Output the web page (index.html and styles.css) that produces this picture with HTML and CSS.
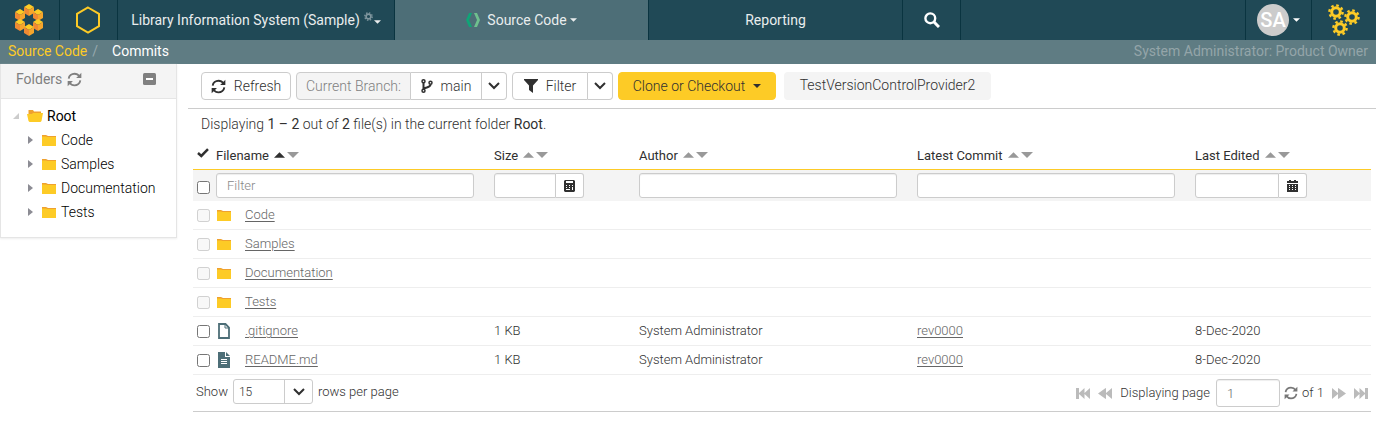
FILE: index.html
```html
<!DOCTYPE html>
<html lang="en">
<head>
<meta charset="utf-8">
<title>Source Code - Commits</title>
<link rel="stylesheet" href="styles.css">
</head>
<body>
<svg class="sprite" aria-hidden="true">
  <symbol id="cube" viewBox="1 0 10 12"><path fill="#fdcb26" d="M6 0l5 3-5 3-5-3z"/><path fill="#f08a33" d="M1 3l5 3v6L1 9z"/><path fill="#f6a52c" d="M11 3L6 6v6l5-3z"/></symbol>
  <symbol id="gear" viewBox="0 0 16 16"><circle cx="8" cy="8" r="4.300" fill="none" stroke="currentColor" stroke-width="3"/><circle cx="8" cy="8" r="6.600" fill="none" stroke="currentColor" stroke-width="2.400" stroke-dasharray="2.600 2.584"/></symbol>
  <symbol id="sync" viewBox="0 0 16 16"><path fill="none" stroke="currentColor" stroke-width="2" d="M1.800 7C2.200 3.800 5 1.800 8 1.800c2.200 0 4 1 5.200 2.800M14.200 9c-.4 3.200-3.200 5.200-6.200 5.200-2.200 0-4-1-5.200-2.800"/><path fill="currentColor" d="M15.300.8v5.600H9.700l2-2zM.7 15.200V9.600h5.600l-2 2z"/></symbol>
  <symbol id="caret" viewBox="0 0 8 4"><path fill="currentColor" d="M0 0h8L4 4z"/></symbol>
  <symbol id="chev" viewBox="0 0 12 8"><path fill="none" stroke="currentColor" stroke-width="2" d="M1 1l5 5 5-5"/></symbol>
  <symbol id="up" viewBox="0 0 12 6"><path fill="currentColor" d="M0 6h12L6 0z"/></symbol>
  <symbol id="down" viewBox="0 0 12 6"><path fill="currentColor" d="M0 0h12L6 6z"/></symbol>
  <symbol id="folder" viewBox="0 0 14 11"><path fill="#efa12f" d="M0 0h4l2 1h8v3H0z"/><path fill="#fdcb26" d="M0 1.500h4L5.200 2H14v9H0z"/></symbol>
  <symbol id="open" viewBox="0 0 16 12"><path fill="#efa12f" d="M1.500 0h4.500l1 1.500h7V6h-12.500z"/><path fill="#fdcb26" d="M0 4h5l1-1h10l-1.500 8-1 1h-11l-1-1z"/></symbol>
  <symbol id="right" viewBox="0 0 5 8"><path fill="currentColor" d="M0 0l5 4-5 4z"/></symbol>
  <symbol id="dbl" viewBox="0 0 14 11"><path fill="currentColor" d="M0 0l6 5V0l1 .5L14 5.500 7 10.500l-1 .5V6l-6 5z"/></symbol>
  <symbol id="last" viewBox="0 0 14 11"><path fill="currentColor" d="M0 0l5.500 5V0l5.500 5V0h3v11h-3V6l-5.500 5V6L0 11z"/></symbol>
</svg>
<header class="topbar">
  <a class="nav logo" href="#" aria-label="Home"><svg width="28" height="32" viewBox="0 0 28 32">
    <use href="#cube" x="9" y="0" width="10" height="12"/><use href="#cube" x="0" y="5" width="10" height="12"/><use href="#cube" x="18" y="5" width="10" height="12"/><use href="#cube" x="0" y="15" width="10" height="12"/><use href="#cube" x="18" y="15" width="10" height="12"/><use href="#cube" x="9" y="20" width="10" height="12"/></svg></a>
  <a class="nav hex" href="#" aria-label="Product"><svg width="26" height="28" viewBox="0 0 26 28"><path fill="none" stroke="#fdcb26" stroke-width="2" d="M13 1.500l11 6.300v12.400l-11 6.300-11-6.300V7.800z"/></svg></a>
  <a class="nav product" href="#">Library Information System (Sample)<svg class="tiny" width="9" height="9"><use href="#gear"/></svg><svg class="low" width="7" height="4"><use href="#caret"/></svg></a>
  <a class="nav tab active" href="#"><svg class="code" width="14" height="14" viewBox="0 0 14 14"><path fill="#0fa577" d="M3 0h3L3 7l3 7H3L0 7z"/><path fill="#6fbf8e" d="M8 0h3l3 7-3 7H8l3-7z"/></svg>Source Code<svg width="7" height="4"><use href="#caret"/></svg></a>
  <a class="nav tab" href="#">Reporting</a>
  <button class="nav search" aria-label="Search"><svg width="16" height="16" viewBox="0 0 16 16"><circle cx="6.300" cy="6.300" r="4.900" fill="none" stroke="currentColor" stroke-width="2.400"/><path stroke="currentColor" stroke-width="3" d="M10 10l5 5"/></svg></button>
  <span class="grow"></span>
  <button class="nav user" aria-label="User menu"><span class="avatar">SA</span><svg width="7" height="4"><use href="#caret"/></svg></button>
  <button class="nav admin" aria-label="Administration"><svg width="34" height="34" viewBox="0 0 34 34"><use href="#gear" x="1" y="1" width="16" height="16"/><use href="#gear" x="17" y="6" width="16" height="16"/><use href="#gear" x="5" y="17" width="16" height="16"/></svg></button>
</header>
<nav class="crumbs" aria-label="Breadcrumb"><a href="#">Source Code</a><span class="slash">/</span><span>Commits</span><span class="role">System Administrator: Product Owner</span></nav>
<div class="page">
  <aside class="side">
    <div class="side-head"><span>Folders</span><svg width="15" height="15"><use href="#sync"/></svg><button class="collapse" aria-label="Collapse folders"><svg width="13" height="12" viewBox="0 0 13 12"><rect width="13" height="12" rx="1.500" fill="#808080"/><path stroke="#fff" stroke-width="2" d="M3 6h7"/></svg></button></div>
    <ul class="tree">
      <li class="root"><svg class="corner" width="6" height="6" viewBox="0 0 6 6"><path fill="#ccc" d="M6 0v6H0z"/></svg><svg width="16" height="12"><use href="#open"/></svg>Root</li>
      <li><svg class="arrow" width="5" height="8"><use href="#right"/></svg><svg width="14" height="11"><use href="#folder"/></svg>Code</li>
      <li><svg class="arrow" width="5" height="8"><use href="#right"/></svg><svg width="14" height="11"><use href="#folder"/></svg>Samples</li>
      <li><svg class="arrow" width="5" height="8"><use href="#right"/></svg><svg width="14" height="11"><use href="#folder"/></svg>Documentation</li>
      <li><svg class="arrow" width="5" height="8"><use href="#right"/></svg><svg width="14" height="11"><use href="#folder"/></svg>Tests</li>
    </ul>
  </aside>
  <main class="main">
    <div class="toolbar">
      <button class="btn refresh"><svg width="15" height="15"><use href="#sync"/></svg>Refresh</button>
      <div class="group"><span class="btn label">Current Branch:</span><button class="btn branch"><svg width="12" height="14" viewBox="0 0 12 14"><g fill="none" stroke="currentColor" stroke-width="1.500"><circle cx="2.500" cy="2.300" r="1.500"/><circle cx="2.500" cy="11.700" r="1.500"/><circle cx="9.500" cy="3.800" r="1.500"/><path stroke-width="2" d="M2.500 4v6.500M9.500 5.500c0 3-4 2.500-6.500 4"/></g></svg>main</button><button class="btn drop" aria-label="Choose branch"><svg width="12" height="8"><use href="#chev"/></svg></button></div>
      <div class="group"><button class="btn filter"><svg width="14" height="14" viewBox="0 0 14 14"><path fill="currentColor" d="M0 0h14v1L9 6.500V14l-4-3V6.500L0 1z"/></svg>Filter</button><button class="btn drop" aria-label="Filter options"><svg width="12" height="8"><use href="#chev"/></svg></button></div>
      <button class="btn clone">Clone or Checkout<svg width="8" height="4"><use href="#caret"/></svg></button>
      <span class="provider">TestVersionControlProvider2</span>
    </div>
    <p class="summary">Displaying <b>1 – 2</b> out of <b>2</b> file(s) in the current folder <b>Root</b>.</p>
    <table class="grid">
      <colgroup><col class="c-check"><col class="c-wide"><col class="c-size"><col class="c-wide"><col class="c-wide"><col></colgroup>
      <thead>
        <tr class="heads"><th><svg class="tick" width="12" height="10" viewBox="0 0 12 10"><path fill="none" stroke="currentColor" stroke-width="2.500" d="M1 5l3.300 3L11 1.200"/></svg></th>
          <th>Filename <span class="sort asc"><svg width="11" height="6"><use href="#up"/></svg><svg width="12" height="6"><use href="#down"/></svg></span></th>
          <th>Size <span class="sort"><svg width="11" height="6"><use href="#up"/></svg><svg width="12" height="6"><use href="#down"/></svg></span></th>
          <th>Author <span class="sort"><svg width="11" height="6"><use href="#up"/></svg><svg width="12" height="6"><use href="#down"/></svg></span></th>
          <th>Latest Commit <span class="sort"><svg width="11" height="6"><use href="#up"/></svg><svg width="12" height="6"><use href="#down"/></svg></span></th>
          <th>Last Edited <span class="sort"><svg width="11" height="6"><use href="#up"/></svg><svg width="12" height="6"><use href="#down"/></svg></span></th></tr>
        <tr class="filters"><td><input class="all" type="checkbox" aria-label="Select all"></td>
          <td><input class="field" type="text" placeholder="Filter" aria-label="Filter by filename"></td>
          <td><div class="combo size"><input class="field" type="text" aria-label="Filter by size"><button class="pick" aria-label="Size range"><svg width="11" height="12" viewBox="0 0 11 12"><path fill="currentColor" fill-rule="evenodd" d="M1 0h9l1 1v10l-1 1H1l-1-1V1zM2 1v2h7V1zM2 5v1h1V5zm3 0v1h1V5zm3 0v1h1V5zM2 7v1h1V7zm3 0v1h1V7zM2 9v1h4V9zm6-2v3h1V7z"/></svg></button></div></td>
          <td><input class="field" type="text" aria-label="Filter by author"></td>
          <td><input class="field" type="text" aria-label="Filter by commit"></td>
          <td><div class="combo date"><input class="field" type="text" aria-label="Filter by date"><button class="pick" aria-label="Choose date"><svg width="11" height="12" viewBox="0 0 11 12"><path fill="currentColor" fill-rule="evenodd" d="M2 0h2v1h3V0h2v1h2v2H0V1h2zM0 4h11v8H0zM2 5v1h1V5zm3 0v1h1V5zm3 0v1h1V5zM2 7v1h1V7zm3 0v1h1V7zm3 0v1h1V7zM2 9v1h1V9zm3 0v1h1V9zm3 0v1h1V9z"/></svg></button></div></td></tr>
      </thead>
      <tbody>
        <tr><td><input type="checkbox" disabled aria-label="Code"></td><td><div class="file"><svg width="14" height="11"><use href="#folder"/></svg><a href="#">Code</a></div></td><td></td><td></td><td></td><td></td></tr>
        <tr><td><input type="checkbox" disabled aria-label="Samples"></td><td><div class="file"><svg width="14" height="11"><use href="#folder"/></svg><a href="#">Samples</a></div></td><td></td><td></td><td></td><td></td></tr>
        <tr><td><input type="checkbox" disabled aria-label="Documentation"></td><td><div class="file"><svg width="14" height="11"><use href="#folder"/></svg><a href="#">Documentation</a></div></td><td></td><td></td><td></td><td></td></tr>
        <tr><td><input type="checkbox" disabled aria-label="Tests"></td><td><div class="file"><svg width="14" height="11"><use href="#folder"/></svg><a href="#">Tests</a></div></td><td></td><td></td><td></td><td></td></tr>
        <tr><td><input type="checkbox" aria-label=".gitignore"></td><td><div class="file doc"><svg width="14" height="16" viewBox="0 0 14 16"><path fill="#fff" stroke="#4d6e77" stroke-width="1.800" d="M2 1h6.500L12 4.500V15H2z"/><path fill="none" stroke="#4d6e77" d="M8 1v4h4"/></svg><a href="#">.gitignore</a></div></td><td>1 KB</td><td>System Administrator</td><td><a href="#">rev0000</a></td><td>8-Dec-2020</td></tr>
        <tr><td><input type="checkbox" aria-label="README.md"></td><td><div class="file doc"><svg width="14" height="16" viewBox="0 0 14 16"><path fill="#4d6e77" d="M1 0h7v5h5v11H1zM9 0l4 4H9z"/><path stroke="#fff" d="M4 7.500h6M4 9.500h6M4 11.500h6"/></svg><a href="#">README.md</a></div></td><td>1 KB</td><td>System Administrator</td><td><a href="#">rev0000</a></td><td>8-Dec-2020</td></tr>
      </tbody>
    </table>
    <div class="pager">
      <div class="rows"><label for="rows">Show</label><span class="select"><select id="rows"><option>15</option><option>50</option></select><span class="arrowbox"><svg width="12" height="8"><use href="#chev"/></svg></span></span><span>rows per page</span></div>
      <div class="pages"><button aria-label="First page"><svg class="flip" width="14" height="11"><use href="#last"/></svg></button><button aria-label="Previous page"><svg class="flip" width="14" height="11"><use href="#dbl"/></svg></button><label for="page">Displaying page</label><input id="page" class="field" type="text" value="1"><button class="reload" aria-label="Reload"><svg width="14" height="14"><use href="#sync"/></svg></button><span class="total">of 1</span><button aria-label="Next page"><svg width="14" height="11"><use href="#dbl"/></svg></button><button aria-label="Last page"><svg width="14" height="11"><use href="#last"/></svg></button></div>
    </div>
  </main>
</div>
</body>
</html>
```
FILE: styles.css
```css
* { box-sizing: border-box; }
body { margin: 0; background: #fff; color: #303030; font: 300 14px/20px Roboto, "Noto Sans", sans-serif; }
button, input, select { font: inherit; color: inherit; margin: 0; }
button { cursor: pointer; padding: 0; border: 0; background: none; }
svg { display: block; flex: none; }
a { color: inherit; text-decoration: none; }
.sprite { position: absolute; width: 0; height: 0; }

.topbar { display: flex; height: 40px; background: #204956; color: #e9edee; font-weight: 400; }
.nav { display: flex; align-items: center; justify-content: center; border-right: 1px solid #0a3440; }
.logo { width: 60px; padding-right: 1px; }
.hex { width: 58px; padding-right: 1px; }
.product { width: 277px; }
.tiny { color: #80979f; margin: 0 1px 8px 4px; }
.low { margin-top: 4px; }
.tab { width: 254px; gap: 3px; }
.code { margin-right: 4px; }
.active { background: #4d6e77; }
.search { width: 58px; color: #fff; }
.grow { flex: 1; border-right: 1px solid #0a3440; }
.user { width: 66px; gap: 4px; color: #fff; }
.avatar { width: 32px; height: 32px; border-radius: 50%; background: #ccc; font-size: 20px; font-weight: 500; line-height: 32px; }
.admin { width: 64px; border: 0; color: #fdcb26; }

.crumbs { display: flex; height: 24px; padding: 0 8px; background: #5f7c83; color: #fff; font-weight: 400; line-height: 23px; }
.crumbs a { color: #fdcb26; }
.slash { color: #97a9ae; margin: 0 14px 0 5px; }
.role { margin-left: auto; color: #94a5a9; }

.page { display: flex; align-items: flex-start; gap: 11px; }
.side { width: 177px; flex: none; border: 1px solid #e5e5e5; border-top: 0; box-shadow: 0 1px 2px #eee; }
.side-head { display: flex; align-items: center; gap: 5px; height: 35px; padding: 0 20px 4px 15px; background: #f4f4f4; border-bottom: 1px solid #e5e5e5; color: #808080; font-weight: 400; }
.collapse { margin-left: auto; }
.tree { list-style: none; margin: 0; padding: 5px 0 13px; color: #000; }
.tree li { display: flex; align-items: center; height: 24px; gap: 5px; padding-left: 27px; }
.tree .root { padding-left: 12px; font-weight: 400; gap: 4px; }
.root .corner { margin-right: 4px; }
.arrow { color: #8c8c94; margin-right: 4px; }

.main { flex: 1; min-width: 0; }
.toolbar { display: flex; gap: 5px; padding: 8px 13px 8px; border-bottom: 1px solid #ccc; }
.btn { display: flex; align-items: center; justify-content: center; height: 28px; border: 1px solid #ccc; border-radius: 4px; background: #fff; }
.refresh { width: 90px; gap: 8px; }
.group { display: flex; }
.group .btn { border-radius: 0; }
.group .btn + .btn { border-left: 0; }
.group .btn:first-child { border-radius: 4px 0 0 4px; }
.group .btn:last-child { border-radius: 0 4px 4px 0; }
.label { width: 115px; color: #808080; }
.group .label { background: #f4f4f4; }
.branch { width: 71px; gap: 8px; }
.drop { width: 25px; }
.filter { width: 76px; gap: 8px; }
.clone { width: 158px; gap: 8px; border-color: #fdcb26; background: #fdcb26; }
.provider { width: 207px; height: 28px; margin-left: 3px; border-radius: 4px; background: #f4f4f4; line-height: 27px; text-align: center; }
.summary { margin: 0; padding: 5px 13px 6px; }
.summary b { font-weight: 400; }

.grid { width: calc(100% - 10px); margin-left: 5px; table-layout: fixed; border-spacing: 0; font-size: 13px; }
.c-check { width: 19px; }
.c-wide { width: 23.6%; }
.c-size { width: 145px; }
.grid th, .grid td { padding: 0 0 0 4px; text-align: left; }
.grid .heads th { height: 30px; padding-top: 2px; border-bottom: 1px solid #fdcb26; font-weight: 400; }
.tick { margin-bottom: 6px; }
.sort { display: inline-flex; gap: 2px; margin-left: 2px; color: #999; vertical-align: 2px; }
.asc svg:first-child { color: #303030; }
.filters { background: #f4f4f4; }
.filters td { height: 31px; padding-right: 16px; }
.grid input[type="checkbox"] { display: block; width: 13px; height: 13px; }
.grid .all { margin-top: 4px; }
.grid tbody td { height: 29px; border-bottom: 1px solid #eee; }
.grid td a { color: #666; text-decoration: underline; text-underline-offset: 2px; }
.file { display: flex; align-items: center; gap: 14px; padding-left: 1px; }
.field { display: block; width: 100%; min-width: 0; height: 25px; padding: 0 10px; border: 1px solid #ccc; border-radius: 3px; background: #fff; box-shadow: inset 0 1px 1px #eee; }
.field::placeholder { color: #888; }
.combo { display: flex; }
.combo .field { border-radius: 3px 0 0 3px; }
.size { width: 90px; }
.date { width: 112px; }
.pick { display: flex; flex: none; align-items: center; justify-content: center; width: 28px; border: 1px solid #ccc; border-left: 0; border-radius: 0 3px 3px 0; background: #fff; }

.pager { display: flex; justify-content: space-between; height: 37px; margin: 0 5px; padding: 4px 3px; border-bottom: 1px solid #ccc; font-size: 13px; }
.rows { display: flex; align-items: center; gap: 5px; height: 25px; }
.select { position: relative; width: 80px; }
.select select { display: block; appearance: none; width: 100%; height: 25px; padding: 0 5px; border: 1px solid #ccc; border-radius: 3px; background: #fff; font-size: 12px; }
.arrowbox { position: absolute; inset: 0 0 0 auto; width: 29px; display: flex; align-items: center; justify-content: center; border-left: 1px solid #ccc; pointer-events: none; }
.pages { display: flex; align-items: center; gap: 8px; color: #333; }
.pages button { color: #bbb; }
.pages .field { width: 64px; height: 28px; margin-left: -2px; color: #666; }
.pages .reload { color: #777; margin-right: -4px; margin-left: -4px; }
.flip { transform: scaleX(-1); }
```
